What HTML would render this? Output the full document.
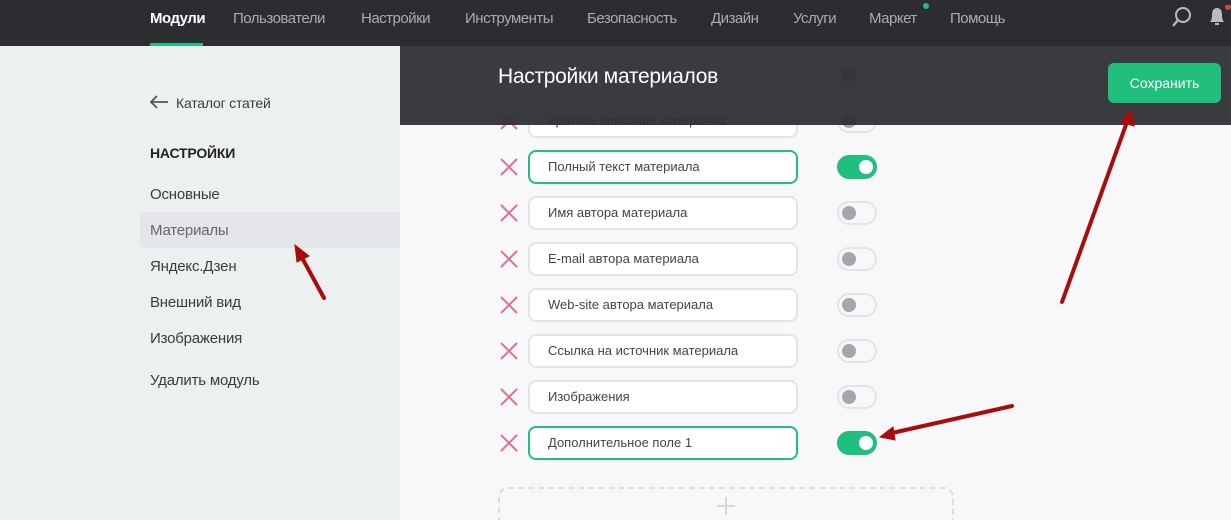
<!DOCTYPE html>
<html style="overflow:hidden;height:520px"><head><meta charset="utf-8"><style>
*{margin:0;padding:0;box-sizing:border-box}
body{width:1231px;height:520px;overflow:hidden;position:relative;font-family:"Liberation Sans","DejaVu Sans",sans-serif;background:#f8f8fa}
.top{position:absolute;left:0;top:0;width:1231px;height:46px;background:#2c2d30}
.nav{position:absolute;top:10px;font-size:15px;color:#a9abae;letter-spacing:-0.5px}
.side{position:absolute;left:0;top:46px;width:400px;height:474px;background:#edf0f1}
.si{position:absolute;left:150px;font-size:15px;color:#3a3b3e;letter-spacing:-0.2px}
.row{position:absolute;left:528px;width:270px;height:34px;border:2px solid #e3e4e8;border-radius:8px;background:#fff;font-size:13px;color:#444;padding-left:18px;line-height:30px}
.row.on{border-color:#20bf80}
.tg{position:absolute;left:837px;width:40px;height:24px;border-radius:12px;border:2px solid #e3e4e8;background:#f8f8fa}
.tg::after{content:"";position:absolute;left:3px;top:3px;width:14px;height:14px;border-radius:50%;background:#a5a6a9}
.tg.on{background:#20bf80;border-color:#20bf80}
.tg.on::after{left:20px;background:#fff}
.x{position:absolute;left:500px;width:18px;height:18px}
</style></head><body>
<div class="top">
<div class="nav" style="left:150px;color:#fff;font-weight:bold">Модули</div>
<div style="position:absolute;left:150px;top:43px;width:53px;height:3px;background:#20bf80"></div>
<div class="nav" style="left:233px">Пользователи</div>
<div class="nav" style="left:361px">Настройки</div>
<div class="nav" style="left:465px">Инструменты</div>
<div class="nav" style="left:587px">Безопасность</div>
<div class="nav" style="left:711px">Дизайн</div>
<div class="nav" style="left:793px">Услуги</div>
<div class="nav" style="left:869px">Маркет</div>
<div style="position:absolute;left:923px;top:3px;width:6px;height:6px;border-radius:50%;background:#20bf80"></div>
<div class="nav" style="left:950px">Помощь</div>
<svg style="position:absolute;left:1170px;top:5px" width="24" height="24"><circle cx="13" cy="10" r="7" fill="none" stroke="#bbb" stroke-width="2"/><line x1="8" y1="15" x2="3" y2="21" stroke="#bbb" stroke-width="2.2"/></svg>
<svg style="position:absolute;left:1206px;top:5px" width="25" height="22"><path d="M4 17 Q6 15 6 10 Q6 3 11 3 Q16 3 16 10 Q16 15 18 17 Z" fill="#bbb"/><rect x="9" y="18" width="4" height="2" fill="#bbb"/><circle cx="22" cy="2" r="3" fill="#e04040"/></svg>
</div>
<div class="side">
<div style="position:absolute;left:140px;top:166px;width:260px;height:36px;background:#e3e5e8;border-radius:6px 0 0 6px"></div>
<svg style="position:absolute;left:148px;top:48px" width="26" height="16"><path d="M20 8H3M9 2L3 8l6 6" fill="none" stroke="#555" stroke-width="1.8"/></svg>
<div class="si" style="left:176px;top:49px;font-size:14px">Каталог статей</div>
<div class="si" style="top:99px;font-weight:bold;color:#222;font-size:14px">НАСТРОЙКИ</div>
<div class="si" style="top:140px">Основные</div>
<div class="si" style="top:176px;color:#666">Материалы</div>
<div class="si" style="top:212px">Яндекс.Дзен</div>
<div class="si" style="top:248px">Внешний вид</div>
<div class="si" style="top:284px">Изображения</div>
<div class="si" style="top:326px">Удалить модуль</div>
</div>

<div class="row" style="top:58px"></div><div class="tg" style="top:63px"></div>
<svg class="x" style="top:112px" viewBox="0 0 18 18"><path d="M1 1L17 17M17 1L1 17" stroke="#e0708f" stroke-width="2"/></svg>
<div class="row" style="top:104px">Краткое описание материала</div><div class="tg" style="top:109px"></div>
<svg class="x" style="top:158px" viewBox="0 0 18 18"><path d="M1 1L17 17M17 1L1 17" stroke="#e0708f" stroke-width="2"/></svg>
<div class="row on" style="top:150px">Полный текст материала</div><div class="tg on" style="top:155px"></div>
<svg class="x" style="top:204px" viewBox="0 0 18 18"><path d="M1 1L17 17M17 1L1 17" stroke="#e0708f" stroke-width="2"/></svg>
<div class="row" style="top:196px">Имя автора материала</div><div class="tg" style="top:201px"></div>
<svg class="x" style="top:250px" viewBox="0 0 18 18"><path d="M1 1L17 17M17 1L1 17" stroke="#e0708f" stroke-width="2"/></svg>
<div class="row" style="top:242px">E-mail автора материала</div><div class="tg" style="top:247px"></div>
<svg class="x" style="top:296px" viewBox="0 0 18 18"><path d="M1 1L17 17M17 1L1 17" stroke="#e0708f" stroke-width="2"/></svg>
<div class="row" style="top:288px">Web-site автора материала</div><div class="tg" style="top:293px"></div>
<svg class="x" style="top:342px" viewBox="0 0 18 18"><path d="M1 1L17 17M17 1L1 17" stroke="#e0708f" stroke-width="2"/></svg>
<div class="row" style="top:334px">Ссылка на источник материала</div><div class="tg" style="top:339px"></div>
<svg class="x" style="top:388px" viewBox="0 0 18 18"><path d="M1 1L17 17M17 1L1 17" stroke="#e0708f" stroke-width="2"/></svg>
<div class="row" style="top:380px">Изображения</div><div class="tg" style="top:385px"></div>
<svg class="x" style="top:434px" viewBox="0 0 18 18"><path d="M1 1L17 17M17 1L1 17" stroke="#e0708f" stroke-width="2"/></svg>
<div class="row on" style="top:426px">Дополнительное поле 1</div><div class="tg on" style="top:431px"></div>
<div style="position:absolute;left:498px;top:487px;width:456px;height:33px;border:2px dashed #dcdde0;border-bottom:none;border-radius:10px 10px 0 0"></div>
<svg style="position:absolute;left:716px;top:496px" width="20" height="20"><path d="M10 1V19M1 10H19" stroke="#d6d7da" stroke-width="2"/></svg>

<div style="position:absolute;left:400px;top:46px;width:831px;height:79px;background:rgba(46,47,50,0.94)"></div>
<div style="position:absolute;left:498px;top:65px;font-size:21px;color:#fff;letter-spacing:-0.3px">Настройки материалов</div>
<div style="position:absolute;left:1108px;top:63px;width:113px;height:40px;background:#20bf7b;border-radius:6px;color:#fff;font-size:14px;text-align:center;line-height:40px">Сохранить</div>

<svg style="position:absolute;left:0;top:0" width="1231" height="520">
<g stroke="#a80c0c" stroke-width="4" stroke-linecap="round" fill="#a80c0c">
<line x1="324" y1="298" x2="300" y2="254"/>
<polygon points="295,245 309,256 297,262" stroke-width="1"/>
<line x1="1062" y1="302" x2="1127" y2="122"/>
<polygon points="1131,110 1134,126 1121,122" stroke-width="1"/>
<line x1="1012" y1="406" x2="892" y2="433"/>
<polygon points="880,437 893,427 895,440" stroke-width="1"/>
</g></svg>
</body></html>
